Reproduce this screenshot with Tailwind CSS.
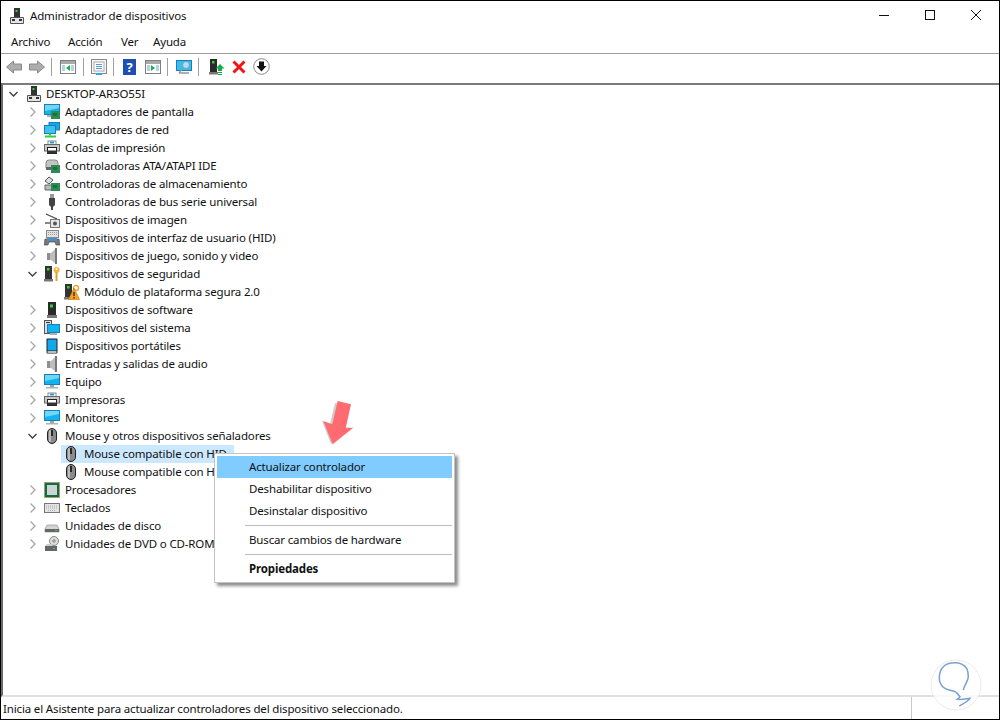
<!DOCTYPE html>
<html lang="es">
<head>
    <meta charset="UTF-8">
    <title>Administrador de dispositivos</title>
    <script src="https://cdn.jsdelivr.net/npm/@tailwindcss/browser@4"></script>
</head>
<body class="bg-white">
<!-- Icon sprites -->
<svg class="hidden">
    <defs>
        <symbol id="pc" viewBox="0 0 16 16">
            <rect x="5" y="0" width="6" height="9" fill="#333"/><rect x="6.500" y="2" width="2" height="2" fill="#2fd13a"/>
            <path d="M1.500 9.500h13v6h-13z" fill="#e4e4e4" stroke="#555"/><rect x="3" y="11" width="3" height="2" fill="#333"/><rect x="10" y="11" width="3" height="2" fill="#333"/>
        </symbol>
        <symbol id="monitor" viewBox="0 0 16 16">
            <rect x="0.500" y="0.500" width="15" height="10" fill="#12b4f0" stroke="#1a7fb8"/><path d="M1 1h14v3L1 7z" fill="#6fd6f7"/>
            <rect x="6" y="11" width="4" height="2" fill="#9aa5ad"/><rect x="2" y="13" width="12" height="1.500" fill="#aab2b8"/>
        </symbol>
        <symbol id="display" viewBox="0 0 16 16">
            <rect x="0.500" y="0.500" width="15" height="10" fill="#12b4f0" stroke="#1a7fb8"/><path d="M1 1h14v3L1 7z" fill="#6fd6f7"/>
            <rect x="3" y="11" width="8" height="2" fill="#aab2b8"/><rect x="7" y="7" width="9" height="8" fill="#2e8b57"/><rect x="9" y="9" width="4" height="3" fill="#173"/>
        </symbol>
        <symbol id="net" viewBox="0 0 16 16">
            <rect x="5" y="0.500" width="10.500" height="7.500" fill="#12a8e6" stroke="#1a7fb8"/><rect x="0.500" y="3.500" width="11" height="8" fill="#3cc2f2" stroke="#1a7fb8"/>
            <rect x="5" y="11.500" width="2" height="2" fill="#2fd13a"/><rect x="1" y="13.500" width="11" height="2" fill="#2fd13a"/>
        </symbol>
        <symbol id="printer" viewBox="0 0 16 16">
            <rect x="4" y="1" width="8" height="4" fill="#fff" stroke="#888"/><rect x="6" y="1.500" width="4" height="2" fill="#2a9fd6"/>
            <rect x="0.500" y="4.500" width="15" height="6.500" fill="#c9c9c9" stroke="#666"/><rect x="3.500" y="7.500" width="9" height="6" fill="#fff" stroke="#222"/><rect x="3" y="10.500" width="10" height="3" fill="#333"/>
        </symbol>
        <symbol id="ata" viewBox="0 0 16 16">
            <path d="M2 5q0-3 3-3h6q3 0 3 3v5H2z" fill="#c4c4c4" stroke="#888"/><rect x="2" y="9" width="12" height="3" fill="#666"/>
            <rect x="7" y="7" width="9" height="8" fill="#2e8b57"/><rect x="9" y="9" width="4" height="3" fill="#173"/>
        </symbol>
        <symbol id="storage" viewBox="0 0 16 16">
            <path d="M1 5l4-4 4 3-4 4z" fill="#ddd" stroke="#555"/><path d="M1 9h9v5H1z" fill="#bbb" stroke="#666"/>
            <rect x="7" y="7" width="9" height="8" fill="#2e8b57"/><rect x="9" y="9" width="4" height="3" fill="#173"/>
        </symbol>
        <symbol id="usb" viewBox="0 0 16 16">
            <rect x="6" y="0" width="4" height="4" fill="#999"/><path d="M5 4h6v7l-2 2v3H7v-3l-2-2z" fill="#444"/>
        </symbol>
        <symbol id="camera" viewBox="0 0 16 16">
            <path d="M2 2l11 5" stroke="#444" stroke-width="1.300"/><rect x="1" y="10" width="5" height="2" fill="#888"/>
            <rect x="6.500" y="7.500" width="9" height="8" fill="#e6e6e6" stroke="#777"/><circle cx="11" cy="11.500" r="2" fill="#555"/>
        </symbol>
        <symbol id="hid" viewBox="0 0 16 16">
            <rect x="2.500" y="0.500" width="12" height="7" fill="#e2e2e2" stroke="#888"/><path d="M4 2.500h9M4 4.500h9" stroke="#999" stroke-dasharray="1 1"/>
            <path d="M1 9h14l1 6h-4l-1-3H5l-1 3H0z" fill="#777" stroke="#444" stroke-width=".6"/><rect x="3" y="8" width="10" height="3" fill="#4a90c8"/>
        </symbol>
        <symbol id="speaker" viewBox="0 0 16 16">
            <path d="M3 5h4l5-5v16l-5-4H3z" fill="#bdbdbd"/><path d="M12 0v16" stroke="#777" stroke-width="2"/><rect x="3" y="5" width="3" height="7" fill="#8e8e8e"/>
        </symbol>
        <symbol id="security" viewBox="0 0 16 16">
            <rect x="1" y="0" width="7" height="13" fill="#333"/><rect x="3" y="2" width="2.500" height="2.500" fill="#2fd13a"/><rect x="0" y="13" width="9" height="2.500" fill="#777"/>
            <circle cx="12.500" cy="4" r="3" fill="#f2b544"/><path d="M12.500 6v9" stroke="#e0a030" stroke-width="2"/><circle cx="12.500" cy="3" r="1" fill="#fff"/>
        </symbol>
        <symbol id="tpm" viewBox="0 0 16 16">
            <rect x="1" y="0" width="7" height="13" fill="#333"/><rect x="3" y="2" width="2.500" height="2.500" fill="#2fd13a"/><rect x="0" y="13" width="7" height="2.500" fill="#777"/>
            <circle cx="12" cy="4" r="2.500" fill="none" stroke="#e9a63a" stroke-width="1.400"/>
            <path d="M10 4l5.500 11.500H4.500z" fill="#f3a41c" stroke="#c46e00" stroke-width=".6"/><path d="M10 8v4M10 13v1.500" stroke="#222" stroke-width="1.300"/>
        </symbol>
        <symbol id="software" viewBox="0 0 16 16">
            <rect x="4" y="0" width="8" height="13" fill="#2a2a2a"/><rect x="6" y="2.500" width="3" height="3" fill="#2fd13a"/><rect x="3" y="13" width="10" height="3" fill="#777"/>
        </symbol>
        <symbol id="system" viewBox="0 0 16 16">
            <rect x="0.500" y="0.500" width="7" height="13" fill="#ddd" stroke="#555"/><rect x="2" y="2" width="4" height="1" fill="#333"/>
            <rect x="3.500" y="4.500" width="12" height="8" fill="#12b4f0" stroke="#1a7fb8"/><rect x="6" y="13" width="7" height="2" fill="#aab2b8"/>
        </symbol>
        <symbol id="portable" viewBox="0 0 16 16">
            <rect x="2.500" y="0.500" width="11" height="15" rx="1" fill="#1e1e1e"/><rect x="3.500" y="1.500" width="9" height="11" fill="#12a8ee"/><rect x="3.500" y="13" width="9" height="2" fill="#bbb"/>
        </symbol>
        <symbol id="mouse" viewBox="0 0 16 16">
            <rect x="3.500" y="0.500" width="9" height="15" rx="4.500" fill="#8a8a8a" stroke="#222"/><rect x="5" y="2" width="2" height="12" rx="1" fill="#bcbcbc"/><rect x="7.200" y="2" width="1.600" height="6" fill="#111"/>
        </symbol>
        <symbol id="cpu" viewBox="0 0 16 16">
            <rect x="0.500" y="0.500" width="15" height="15" fill="#0f6b4f" stroke="#c88a1e" stroke-dasharray="1 1"/><rect x="3" y="3" width="10" height="10" fill="#cdd5d0"/>
        </symbol>
        <symbol id="keyboard" viewBox="0 0 16 16">
            <rect x="0.500" y="3.500" width="15" height="9" fill="#e4e4e4" stroke="#777"/><path d="M2 6h12M2 8h12M4 10.500h8" stroke="#aaa" stroke-dasharray="1 1"/>
        </symbol>
        <symbol id="disk" viewBox="0 0 16 16">
            <path d="M3 7h10l2 4v3H1v-3z" fill="#d5d5d5" stroke="#888" stroke-width=".6"/><rect x="1" y="11" width="14" height="3" fill="#666"/><rect x="11" y="12" width="2" height="1" fill="#2fd13a"/>
        </symbol>
        <symbol id="dvd" viewBox="0 0 16 16">
            <circle cx="10" cy="5" r="4.500" fill="#ddd" stroke="#888"/><circle cx="10" cy="5" r="1.200" fill="#fff" stroke="#777"/>
            <rect x="1" y="10" width="12" height="5" fill="#666"/><path d="M1 10l2-2h5v2z" fill="#ccc"/><rect x="9" y="12" width="2" height="1" fill="#2fd13a"/>
        </symbol>
        <symbol id="chev" viewBox="0 0 8 12"><path d="M1.500 1.500l4.500 4.500-4.500 4.500" fill="none" stroke="#a6a6a6" stroke-width="1.300"/></symbol>
        <symbol id="chevopen" viewBox="0 0 12 8"><path d="M1.500 2l4 4 4-4" fill="none" stroke="#404040" stroke-width="1.400"/></symbol>
        <symbol id="win" viewBox="0 0 16 16">
            <rect x="0.500" y="1.500" width="15" height="13" fill="#fff" stroke="#7f7f7f"/><rect x="1" y="2" width="14" height="3" fill="#a9a9a9"/><path d="M2 7h3M2 9h3M2 11h3M11 7h3M11 9h3M11 11h3" stroke="#6ba5c9"/>
        </symbol>
    </defs>
</svg>

<div class="w-[1000px] h-[720px] flex flex-col border border-black overflow-hidden relative text-[11.5px] tracking-[-0.15px] text-black" style="font-family:'Noto Sans','Open Sans',sans-serif">

    <!-- Title bar -->
    <div class="h-[30px] flex items-center shrink-0">
        <svg class="w-4 h-4 ml-[8px]"><use href="#pc"/></svg>
        <span class="ml-[5px] text-[#111]">Administrador de dispositivos</span>
        <div class="ml-auto flex self-start">
            <svg class="w-[46px] h-[28px]" viewBox="0 0 46 28"><path d="M18 14.500h10" stroke="#111"/></svg>
            <svg class="w-[46px] h-[28px]" viewBox="0 0 46 28"><rect x="18.500" y="9.500" width="9" height="9" fill="none" stroke="#111"/></svg>
            <svg class="w-[46px] h-[28px]" viewBox="0 0 46 28"><path d="M18 9l10 10M28 9l-10 10" stroke="#111"/></svg>
        </div>
    </div>

    <!-- Menu -->
    <div class="h-[23px] flex items-center border-b border-[#a0a0a0] shrink-0 pl-[10px] text-[#111]">
        <span class="w-[57px]">Archivo</span>
        <span class="w-[53px]">Acción</span>
        <span class="w-[32px]">Ver</span>
        <span>Ayuda</span>
    </div>

    <!-- Toolbar -->
    <div class="h-[25px] flex items-center pl-[5px] shrink-0">
        <svg class="w-4 h-4" viewBox="0 0 16 16"><path d="M0.500 8l7-6v3h8v6h-8v3z" fill="#adadad" stroke="#888"/></svg>
        <svg class="w-4 h-4 ml-[7px]" viewBox="0 0 16 16"><path d="M15.500 8l-7-6v3h-8v6h8v3z" fill="#adadad" stroke="#888"/></svg>
        <div class="w-px h-[18px] bg-[#a0a0a0] ml-[6px]"></div>
        <svg class="w-4 h-4 ml-[8px]" viewBox="0 0 16 16"><use href="#win"/><path d="M10 6v6l-4-3z" fill="#18b24b"/></svg>
        <div class="w-px h-[18px] bg-[#a0a0a0] ml-[7px]"></div>
        <svg class="w-4 h-4 ml-[7px]" viewBox="0 0 16 16"><rect x="0.500" y="0.500" width="15" height="14" fill="#f5f5f5" stroke="#888"/><rect x="3" y="3" width="10" height="9" fill="#fff" stroke="#aaa"/><path d="M5 5.500h6M5 7.500h6M5 9.500h6" stroke="#5b9bd5"/><rect x="5" y="14" width="6" height="2" fill="#2aa7e8"/></svg>
        <div class="w-px h-[18px] bg-[#a0a0a0] ml-[6px]"></div>
        <div class="w-[13px] h-[16px] ml-[9px] bg-[#1f4fb4] text-white font-bold text-[13px] leading-[16px] text-center">?</div>
        <svg class="w-4 h-4 ml-[9px]" viewBox="0 0 16 16"><use href="#win"/><path d="M6 6v6l4-3z" fill="#18b24b"/></svg>
        <div class="w-px h-[18px] bg-[#a0a0a0] ml-[6px]"></div>
        <svg class="w-4 h-4 ml-[8px]" viewBox="0 0 16 16"><rect x="0.500" y="1.500" width="15" height="10" fill="#36bdf2" stroke="#1a7fb8"/><circle cx="10" cy="6" r="3.500" fill="#a8e2f8" stroke="#7d9bb0"/><path d="M7 9l-4 5M3 14h10" stroke="#8e9aa3" stroke-width="1.300"/></svg>
        <div class="w-px h-[18px] bg-[#a0a0a0] ml-[6px]"></div>
        <svg class="w-4 h-4 ml-[10px]" viewBox="0 0 16 16"><rect x="1" y="0" width="7" height="13" fill="#2a2a2a"/><rect x="3" y="2" width="2.500" height="2.500" fill="#2fd13a"/><rect x="0" y="13" width="9" height="2.500" fill="#777"/><path d="M11 5l4.500 4.500H13V12H9V9.500H6.500z" fill="#18a84a"/><path d="M9 13.500h4M9 15.500h4" stroke="#18a84a"/></svg>
        <svg class="w-[14px] h-[14px] ml-[7px]" viewBox="0 0 14 14"><path d="M1.500 1.500l11 11M12.500 1.500l-11 11" stroke="#f01414" stroke-width="3"/></svg>
        <svg class="w-[17px] h-[17px] ml-[7px]" viewBox="0 0 17 17"><circle cx="8.500" cy="8.500" r="7.800" fill="#fff" stroke="#888"/><path d="M6 3.500h5v4.500h2.500l-5 5.500-5-5.500H6z" fill="#111"/></svg>
    </div>

    <!-- Device tree -->
    <div class="flex-1 mt-[4px] border-t-2 border-l-2 border-t-[#7a7a7a] border-l-[#6a6a6a] border-b-2 border-b-[#e0e0e0] text-[#111] overflow-hidden">
        <div class="h-[18px] flex items-center pl-[5px]">
            <svg class="w-3 h-2"><use href="#chevopen"/></svg>
            <svg class="w-4 h-4 ml-[6px]"><use href="#pc"/></svg>
            <span class="ml-[4px]">DESKTOP-AR3O55I</span>
        </div>
        <div class="h-[18px] flex items-center pl-[26px]"><svg class="w-2 h-3"><use href="#chev"/></svg><svg class="w-4 h-4 ml-[7px]"><use href="#display"/></svg><span class="ml-[5px]">Adaptadores de pantalla</span></div>
        <div class="h-[18px] flex items-center pl-[26px]"><svg class="w-2 h-3"><use href="#chev"/></svg><svg class="w-4 h-4 ml-[7px]"><use href="#net"/></svg><span class="ml-[5px]">Adaptadores de red</span></div>
        <div class="h-[18px] flex items-center pl-[26px]"><svg class="w-2 h-3"><use href="#chev"/></svg><svg class="w-4 h-4 ml-[7px]"><use href="#printer"/></svg><span class="ml-[5px]">Colas de impresión</span></div>
        <div class="h-[18px] flex items-center pl-[26px]"><svg class="w-2 h-3"><use href="#chev"/></svg><svg class="w-4 h-4 ml-[7px]"><use href="#ata"/></svg><span class="ml-[5px]">Controladoras ATA/ATAPI IDE</span></div>
        <div class="h-[18px] flex items-center pl-[26px]"><svg class="w-2 h-3"><use href="#chev"/></svg><svg class="w-4 h-4 ml-[7px]"><use href="#storage"/></svg><span class="ml-[5px]">Controladoras de almacenamiento</span></div>
        <div class="h-[18px] flex items-center pl-[26px]"><svg class="w-2 h-3"><use href="#chev"/></svg><svg class="w-4 h-4 ml-[7px]"><use href="#usb"/></svg><span class="ml-[5px]">Controladoras de bus serie universal</span></div>
        <div class="h-[18px] flex items-center pl-[26px]"><svg class="w-2 h-3"><use href="#chev"/></svg><svg class="w-4 h-4 ml-[7px]"><use href="#camera"/></svg><span class="ml-[5px]">Dispositivos de imagen</span></div>
        <div class="h-[18px] flex items-center pl-[26px]"><svg class="w-2 h-3"><use href="#chev"/></svg><svg class="w-4 h-4 ml-[7px]"><use href="#hid"/></svg><span class="ml-[5px]">Dispositivos de interfaz de usuario (HID)</span></div>
        <div class="h-[18px] flex items-center pl-[26px]"><svg class="w-2 h-3"><use href="#chev"/></svg><svg class="w-4 h-4 ml-[7px]"><use href="#speaker"/></svg><span class="ml-[5px]">Dispositivos de juego, sonido y video</span></div>
        <div class="h-[18px] flex items-center pl-[24px]"><svg class="w-3 h-2"><use href="#chevopen"/></svg><svg class="w-4 h-4 ml-[5px]"><use href="#security"/></svg><span class="ml-[5px]">Dispositivos de seguridad</span></div>
        <div class="h-[18px] flex items-center pl-[61px]"><svg class="w-4 h-4"><use href="#tpm"/></svg><span class="ml-[4px]">Módulo de plataforma segura 2.0</span></div>
        <div class="h-[18px] flex items-center pl-[26px]"><svg class="w-2 h-3"><use href="#chev"/></svg><svg class="w-4 h-4 ml-[7px]"><use href="#software"/></svg><span class="ml-[5px]">Dispositivos de software</span></div>
        <div class="h-[18px] flex items-center pl-[26px]"><svg class="w-2 h-3"><use href="#chev"/></svg><svg class="w-4 h-4 ml-[7px]"><use href="#system"/></svg><span class="ml-[5px]">Dispositivos del sistema</span></div>
        <div class="h-[18px] flex items-center pl-[26px]"><svg class="w-2 h-3"><use href="#chev"/></svg><svg class="w-4 h-4 ml-[7px]"><use href="#portable"/></svg><span class="ml-[5px]">Dispositivos portátiles</span></div>
        <div class="h-[18px] flex items-center pl-[26px]"><svg class="w-2 h-3"><use href="#chev"/></svg><svg class="w-4 h-4 ml-[7px]"><use href="#speaker"/></svg><span class="ml-[5px]">Entradas y salidas de audio</span></div>
        <div class="h-[18px] flex items-center pl-[26px]"><svg class="w-2 h-3"><use href="#chev"/></svg><svg class="w-4 h-4 ml-[7px]"><use href="#monitor"/></svg><span class="ml-[5px]">Equipo</span></div>
        <div class="h-[18px] flex items-center pl-[26px]"><svg class="w-2 h-3"><use href="#chev"/></svg><svg class="w-4 h-4 ml-[7px]"><use href="#printer"/></svg><span class="ml-[5px]">Impresoras</span></div>
        <div class="h-[18px] flex items-center pl-[26px]"><svg class="w-2 h-3"><use href="#chev"/></svg><svg class="w-4 h-4 ml-[7px]"><use href="#monitor"/></svg><span class="ml-[5px]">Monitores</span></div>
        <div class="h-[18px] flex items-center pl-[24px]"><svg class="w-3 h-2"><use href="#chevopen"/></svg><svg class="w-4 h-4 ml-[5px]"><use href="#mouse"/></svg><span class="ml-[5px]">Mouse y otros dispositivos señaladores</span></div>
        <div class="h-[18px] flex items-center pl-[58px]"><div class="flex items-center h-full bg-[#cce8ff] pr-[7px]"><svg class="w-4 h-4 ml-[2px]"><use href="#mouse"/></svg><span class="ml-[5px]">Mouse compatible con HID</span></div></div>
        <div class="h-[18px] flex items-center pl-[60px]"><svg class="w-4 h-4"><use href="#mouse"/></svg><span class="ml-[5px]">Mouse compatible con HID</span></div>
        <div class="h-[18px] flex items-center pl-[26px]"><svg class="w-2 h-3"><use href="#chev"/></svg><svg class="w-4 h-4 ml-[7px]"><use href="#cpu"/></svg><span class="ml-[5px]">Procesadores</span></div>
        <div class="h-[18px] flex items-center pl-[26px]"><svg class="w-2 h-3"><use href="#chev"/></svg><svg class="w-4 h-4 ml-[7px]"><use href="#keyboard"/></svg><span class="ml-[5px]">Teclados</span></div>
        <div class="h-[18px] flex items-center pl-[26px]"><svg class="w-2 h-3"><use href="#chev"/></svg><svg class="w-4 h-4 ml-[7px]"><use href="#disk"/></svg><span class="ml-[5px]">Unidades de disco</span></div>
        <div class="h-[18px] flex items-center pl-[26px]"><svg class="w-2 h-3"><use href="#chev"/></svg><svg class="w-4 h-4 ml-[7px]"><use href="#dvd"/></svg><span class="ml-[5px]">Unidades de DVD o CD-ROM</span></div>
    </div>

    <!-- Status bar -->
    <div class="h-[22px] flex items-center shrink-0">
        <span class="pl-[2px] pt-[1px] w-[910px] text-[#111]">Inicia el Asistente para actualizar controladores del dispositivo seleccionado.</span>
        <div class="w-px h-full bg-[#c8c8c8]"></div>
    </div>

    <!-- Context menu -->
    <div class="absolute left-[213px] top-[452px] w-[241px] h-[130px] bg-white border border-[#c4c4c4] shadow-[3px_3px_3px_rgba(0,0,0,0.45)] p-[2px] text-[#111]">
        <div class="h-[22px] flex items-center pl-[32px] bg-[#80ccff]">Actualizar controlador</div>
        <div class="h-[22px] flex items-center pl-[32px]">Deshabilitar dispositivo</div>
        <div class="h-[22px] flex items-center pl-[32px]">Desinstalar dispositivo</div>
        <div class="h-px bg-[#bdbdbd] ml-[28px] mt-[3px] mb-[3px]"></div>
        <div class="h-[22px] flex items-center pl-[32px]">Buscar cambios de hardware</div>
        <div class="h-px bg-[#bdbdbd] ml-[28px] mt-[3px] mb-[3px]"></div>
        <div class="h-[22px] flex items-center pl-[32px] font-bold">Propiedades</div>
    </div>

    <!-- Red arrow annotation -->
    <svg class="absolute left-[317px] top-[397px] w-[40px] h-[50px]" viewBox="318 398 40 50">
        <path d="M335 403l13 3-5 22 7-1-19 17-9-23 8 3z" fill="#999" opacity=".5"/>
        <path d="M337.700 401l13.300 3.300-5.300 24 7.600-.6-20.600 16.600-9.400-23.300 9 3.300z" fill="#ff6b70"/>
    </svg>

    <!-- Watermark -->
    <svg class="absolute left-[925px] top-[657px] w-[60px] h-[60px]" viewBox="926 658 60 60">
        <circle cx="956" cy="685" r="25" fill="#fff" fill-opacity=".8" stroke="#ececec"/>
        <path d="M963.300 690c1-5 5-9 5-13.300 0-3-.5-6-1.600-8.400-3-4-7-5.600-11.700-5.600-6 0-9.500 1.500-11.700 4-3 3-4 7-4 11.600 0 4 2 7 4 9 3 3 8 2.500 11.700 4.400 2 1 3.500 3 5 5-1 1.500-2.700 2.600-2.700 2.600 4 .5 11-1 12.700-1-2 3-7 5.500-10.700 7.700" fill="none" stroke="#7aa0d4" stroke-width="1.500"/>
    </svg>
</div>
</body>
</html>
